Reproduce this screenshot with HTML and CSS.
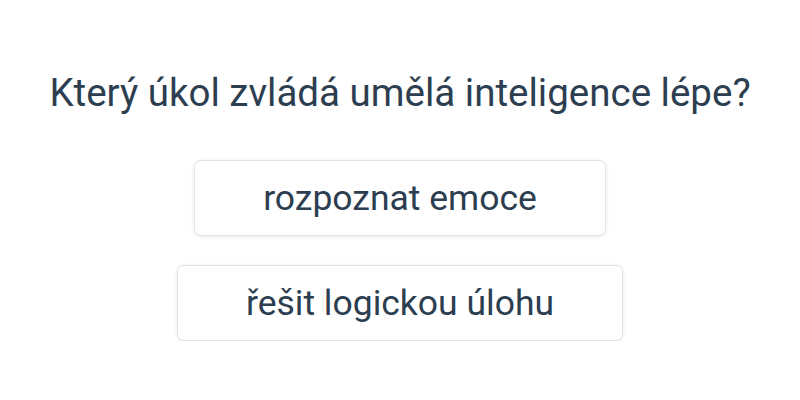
FILE: index.html
```html
<!DOCTYPE html>
<html lang="cs">
<head>
<meta charset="utf-8">
<link rel="stylesheet" href="styles.css">
</head>
<body>
<main class="quiz">
  <h1 class="question">Který úkol zvládá umělá inteligence lépe?</h1>
  <div class="options">
    <button class="option">rozpoznat emoce</button>
    <button class="option">řešit logickou úlohu</button>
  </div>
</main>
</body>
</html>
```

FILE: styles.css
```css
html, body {
  margin: 0;
  background: #ffffff;
}
body {
  font-family: Roboto, "Noto Sans", sans-serif;
  color: #2c3e50;
}
.quiz {
  display: flex;
  flex-direction: column;
  align-items: center;
  padding-top: 70px;
}
.question {
  margin: 0;
  font-size: 38.5px;
  font-weight: 400;
  line-height: 45px;
}
.options {
  margin-top: 45px;
  display: flex;
  flex-direction: column;
  align-items: center;
  gap: 29px;
}
.option {
  font-family: inherit;
  color: #2c3e50;
  font-size: 35.5px;
  line-height: 42px;
  padding: 16px 68px;
  background: #fff;
  border: 1px solid #e2e2e2;
  border-radius: 7px;
  box-shadow: 0 1px 5px rgba(0,0,0,0.08);
  cursor: pointer;
}
```
